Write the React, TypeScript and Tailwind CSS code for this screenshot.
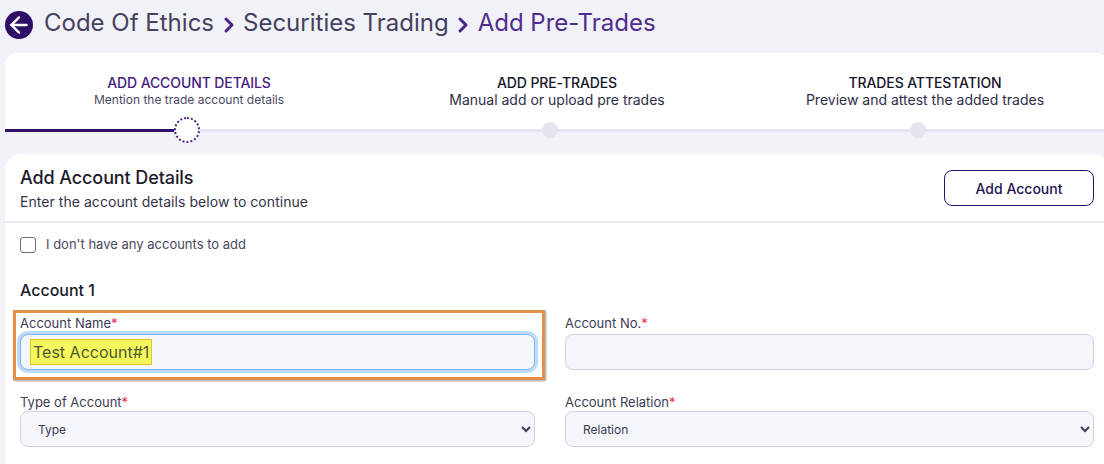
import { ArrowLeft, ChevronRight } from "lucide-react";

const steps = [
  { title: "ADD PRE-TRADES", sub: "Manual add or upload pre trades" },
  { title: "TRADES ATTESTATION", sub: "Preview and attest the added trades" },
];

function Label({ text }: { text: string }) {
  return (
    <label className="block h-[17px] text-[13px] leading-[17px] text-[#3d3a55]">
      {text}
      <span className="text-[#f0264a]">*</span>
    </label>
  );
}

export default function App() {
  return (
    <div className="h-[464px] w-[1104px] overflow-hidden bg-[#f1f2f8] pl-[5px] font-['Inter',sans-serif]">
      {/* Breadcrumb */}
      <div className="flex h-[53px] items-center pb-[4px] text-[24px] text-[#45405f]">
        <div className="flex h-[28px] w-[28px] items-center justify-center rounded-full bg-[#2e0f66]">
          <ArrowLeft size={26} strokeWidth={2.2} className="text-white" />
        </div>
        <span className="mb-[4px] ml-[11px]">Code Of Ethics</span>
        <ChevronRight size={24} strokeWidth={3} className="mx-[2.5px] text-[#4b2288]" />
        <span className="mb-[4px]">Securities Trading</span>
        <ChevronRight size={24} strokeWidth={3} className="mx-[2.5px] text-[#4b2288]" />
        <span className="mb-[4px] text-[#4f2c8c]">Add Pre-Trades</span>
      </div>

      {/* Stepper */}
      <div className="h-[79px] w-[1104px] rounded-t-[12px] bg-white">
        <div className="grid h-[64px] grid-cols-3 pt-[21px] text-center">
          <div>
            <div className="text-[14px] leading-[17px] font-medium tracking-[-0.1px] text-[#45217f]">ADD ACCOUNT DETAILS</div>
            <div className="text-[12px] leading-[17px] text-[#4b4866]">Mention the trade account details</div>
          </div>
          {steps.map((s) => (
            <div key={s.title}>
              <div className="text-[14px] leading-[17px] font-medium tracking-[-0.1px] text-[#15152b]">{s.title}</div>
              <div className="text-[14px] leading-[17px] text-[#2f2e4a]">{s.sub}</div>
            </div>
          ))}
        </div>
        <div className="relative mt-[12px] h-[3px] bg-[#e3e4f0]">
          <div className="h-[3px] w-[170px] bg-[#2e0f66]" />
          <div className="absolute top-[-12px] left-[169px] h-[26px] w-[26px] rounded-full border-2 border-dotted border-[#4b2288] bg-white" />
          <div className="absolute top-[-7px] left-[537px] h-[16px] w-[16px] rounded-full bg-[#e3e4f0]" />
          <div className="absolute top-[-7px] left-[905px] h-[16px] w-[16px] rounded-full bg-[#e3e4f0]" />
        </div>
      </div>

      {/* Account card */}
      <div className="mt-[22px] h-[320px] w-[1104px] rounded-t-[16px] bg-white">
        <div className="flex h-[69px] items-start justify-between border-b-2 border-[#e8e8f4] pt-[13px] pr-[15px] pl-[15px]">
          <div>
            <h2 className="text-[18px] leading-[22px] font-medium tracking-[-0.1px] text-[#1b1b2b]">Add Account Details</h2>
            <p className="mt-[4px] text-[14px] leading-[17px] tracking-[0.05px] text-[#33324a]">Enter the account details below to continue</p>
          </div>
          <button className="mt-[3px] h-[36px] w-[150px] rounded-[8px] border border-[#2e0f66] bg-white text-[14px] font-medium text-[#1c1450]">
            Add Account
          </button>
        </div>

        <div className="px-[15px]">
          <div className="flex h-[44px] items-center gap-[10px]">
            <span className="h-[16px] w-[16px] rounded-[3px] border border-[#6f6f78] bg-white" />
            <span className="text-[13px] text-[#4a4860]">I don't have any accounts to add</span>
          </div>
          <h3 className="mt-[13px] text-[16px] leading-[20px] font-medium text-[#1b1b2b]">Account 1</h3>

          <div className="mt-[15px] grid grid-cols-[515px_529px] gap-x-[30px] gap-y-[24px]">
            <div className="relative">
              <div className="absolute top-[-5px] left-[-7px] h-[70px] w-[532px] border-[3px] border-[#e08f4c] shadow-[1px_1px_2px_rgba(0,0,0,0.4)]" />
              <Label text="Account Name" />
              <div className="mt-[2px] flex h-[36px] items-center rounded-[8px] border border-[#7db4f5] bg-[#f5f6fc] pl-[9px] shadow-[0_0_0_3px_#bcdafc]">
                <span className="border border-[#e8c81e] bg-[#f5f85c] px-[2px] text-[16px] leading-[24px] text-[#4e5a30]">Test Account#1</span>
              </div>
            </div>
            <div>
              <Label text="Account No." />
              <div className="mt-[2px] h-[36px] rounded-[8px] border border-[#cfd1de] bg-[#f5f6fc]" />
            </div>
            <div>
              <Label text="Type of Account" />
              <select className="h-[36px] w-full rounded-[8px] border border-[#cfd1de] bg-[#f5f6fc] pl-[13px] text-[12px] text-[#3a3a55]">
                <option>Type</option>
              </select>
            </div>
            <div>
              <Label text="Account Relation" />
              <select className="h-[36px] w-full rounded-[8px] border border-[#cfd1de] bg-[#f5f6fc] pl-[13px] text-[12px] text-[#3a3a55]">
                <option>Relation</option>
              </select>
            </div>
          </div>
        </div>
      </div>
    </div>
  );
}
